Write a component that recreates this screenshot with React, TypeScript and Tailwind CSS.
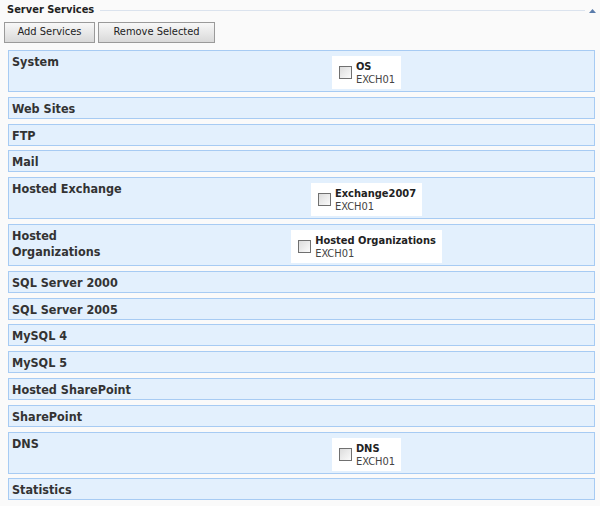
const FONT = "font-['DejaVu_Sans_Condensed','DejaVu_Sans',sans-serif]";

interface ServiceRow {
    title: string;
    item?: string;
}

const ROWS: ServiceRow[] = [
    { title: "System", item: "OS" },
    { title: "Web Sites" },
    { title: "FTP" },
    { title: "Mail" },
    { title: "Hosted Exchange", item: "Exchange2007" },
    { title: "Hosted Organizations", item: "Hosted Organizations" },
    { title: "SQL Server 2000" },
    { title: "SQL Server 2005" },
    { title: "MySQL 4" },
    { title: "MySQL 5" },
    { title: "Hosted SharePoint" },
    { title: "SharePoint" },
    { title: "DNS", item: "DNS" },
    { title: "Statistics" },
];

function ServiceBox({ name }: { name: string }) {
    return (
        <div className="bg-white flex items-start gap-[4px] pl-[7px] pr-[6px] pt-[4px] pb-[3px]">
            <div className="mt-[6px] w-[13px] h-[13px] border border-[#707070] bg-gradient-to-br from-[#dcdcdc] to-[#fbfbfb] shrink-0" />
            <div className="flex flex-col leading-[13px]">
                <span className="text-[11px] font-bold text-[#222]">{name}</span>
                <span className="text-[11px] text-[#444]">EXCH01</span>
            </div>
        </div>
    );
}

function Row({ row }: { row: ServiceRow }) {
    return (
        <div
            className={`flex bg-[#e3f0fd] border border-[#a7cbf3] ${row.item ? "h-[42px]" : "h-[22px]"}`}
        >
            <div className="w-[130px] shrink-0 pl-[3px] pt-[3px] text-[12.5px] font-bold leading-[16px] text-[#333]">
                {row.title}
            </div>
            <div className="flex-1 flex justify-center items-start pt-[5px]">
                {row.item && <ServiceBox name={row.item} />}
            </div>
        </div>
    );
}

export default function App() {
    return (
        <div className={`${FONT} w-[600px] h-[506px] bg-[#fafafa] overflow-hidden`}>
            <div className="flex items-center h-[17px] pl-[7px] pr-[4px] pt-[3px]">
                <span className="text-[11px] font-bold text-[#222] leading-[14px]">Server Services</span>
                <div className="flex-1 h-px bg-[#dbe3ee] ml-[6px] mr-[4px]" />
                <svg width="7" height="5" viewBox="0 0 7 5">
                    <path d="M0 5 L3.5 1 L7 5 Z" fill="#5a7cab" />
                </svg>
            </div>
            <div className="flex gap-[3px] pl-[4px] mt-[5px]">
                <button className="w-[91px] h-[21px] border border-[#9a9a9a] bg-gradient-to-b from-[#f8f8f8] to-[#d9d9d9] text-[11px] text-[#222]">
                    Add Services
                </button>
                <button className="w-[117px] h-[21px] border border-[#9a9a9a] bg-gradient-to-b from-[#f8f8f8] to-[#d9d9d9] text-[11px] text-[#222]">
                    Remove Selected
                </button>
            </div>
            <div className="flex flex-col gap-[4.8px] ml-[8px] w-[587px] mt-[7px]">
                {ROWS.map((r) => (
                    <Row key={r.title} row={r} />
                ))}
            </div>
        </div>
    );
}
